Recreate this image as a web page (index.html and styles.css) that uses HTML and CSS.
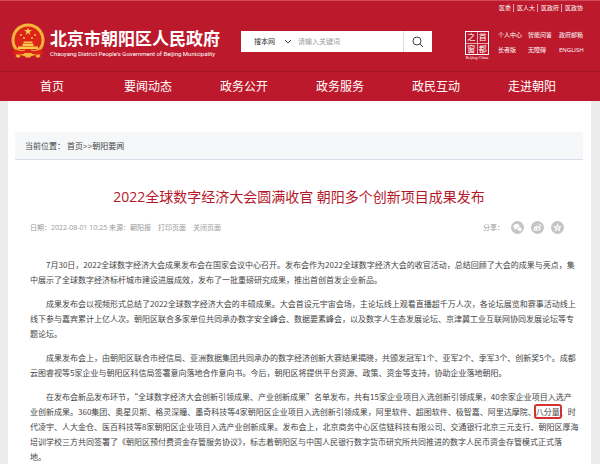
FILE: index.html
```html
<!DOCTYPE html>
<html lang="zh-CN">
<head>
  <meta charset="UTF-8">
  <title>2022全球数字经济大会圆满收官 朝阳多个创新项目成果发布</title>
  <link rel="stylesheet" href="styles.css">
</head>
<body>
  <header class="header">
    <div class="top-links">
      <a href="#">区委</a><a href="#">区人大</a><a href="#">区政府</a><a href="#">区政协</a>
    </div>
    <div class="banner">
      <a href="#" class="logo">
        <svg class="emblem" viewBox="0 0 68 72">
          <path d="M8 48 L4 62 L14 70 L26 66 L34 70 L42 66 L54 70 L64 62 L60 48 Z" fill="#dc2418"/>
          <circle cx="34" cy="34" r="33" fill="#f3b53c"/>
          <circle cx="34" cy="34" r="27" fill="#dc2418"/>
          <path d="M34 9 l2 5 h6 l-5 4 l2 6 l-5 -4 l-5 4 l2 -6 l-5 -4 h6 z" fill="#f8c94a"/>
          <circle cx="20" cy="24" r="2" fill="#f8c94a"/>
          <circle cx="26" cy="30" r="2" fill="#f8c94a"/>
          <circle cx="42" cy="30" r="2" fill="#f8c94a"/>
          <circle cx="48" cy="24" r="2" fill="#f8c94a"/>
          <path d="M26 37 h16 l2 4 h-20 z M23 42 h22 v4 h-22 z M14 47 h40 v5 h-40 z" fill="#f8c94a"/>
          <path d="M7 52 Q20 58 28 54 L34 58 L40 54 Q48 58 61 52 L58 60 Q46 65 40 60 L34 64 L28 60 Q22 65 10 60 Z" fill="#dc2418"/>
          <path d="M12 53 Q22 57 28 54 M56 53 Q46 57 40 54" fill="none" stroke="#f3b53c" stroke-width="2"/>
          <path d="M12 62 l7 3 l-3 5 l-7 -3 z M56 62 l-7 3 l3 5 l7 -3 z M27 60 h14 l-2 9 h-10 z" fill="#f3b53c"/>
        </svg>
        <span class="logo-text">
          <strong>北京市朝阳区人民政府</strong>
          <small>Chaoyang District People's Government of Beijing Municipality</small>
        </span>
      </a>
      <form class="search">
        <select aria-label="搜索范围">
          <option>搜本网</option>
        </select>
        <svg class="arrow" viewBox="0 0 8 5"><path d="M1 1 L4 4 L7 1" fill="none" stroke="#444"/></svg>
        <input type="text" placeholder="请输入关键词" aria-label="关键词">
        <button type="button" aria-label="搜索">
          <svg viewBox="0 0 12 12"><circle cx="5" cy="5" r="4" fill="none" stroke="#444"/><path d="M8 8 L11 11" stroke="#444"/></svg>
        </button>
      </form>
      <a href="#" class="seal">
        <span class="seal-grid"><i>之</i><i>首</i><i>窗</i><i>都</i></span>
        <small>Beijing·China</small>
      </a>
      <div class="tools">
        <a href="#">个人中心</a><a href="#">智能问答</a><a href="#">政府邮箱</a>
        <a href="#">长者版</a><a href="#">无障碍</a><a href="#">ENGLISH</a>
      </div>
    </div>
    <nav class="nav">
      <a href="#">首页</a>
      <a href="#">要闻动态</a>
      <a href="#">政务公开</a>
      <a href="#">政务服务</a>
      <a href="#">政民互动</a>
      <a href="#">走进朝阳</a>
    </nav>
  </header>

  <main class="main">
    <div class="crumb">当前位置： <a href="#">首页</a>&gt;&gt;<a href="#">朝阳要闻</a></div>

    <h1>2022全球数字经济大会圆满收官 朝阳多个创新项目成果发布</h1>

    <div class="meta">
      <span>日期：2022-08-01 10:25 来源：朝阳报</span>
      <a href="#">打印页面</a>
      <a href="#">关闭页面</a>
      <div class="share">
        <span>分享：</span>
        <a href="#" aria-label="微信">
          <svg viewBox="0 0 26 26"><circle cx="13" cy="13" r="13" fill="#c4c4c4"/><ellipse cx="11" cy="11" rx="6" ry="5" fill="#fff"/><path d="M7 14 l-1 4 l4 -2 z" fill="#fff"/><ellipse cx="17" cy="16" rx="5" ry="4" fill="#fff" stroke="#c4c4c4"/><path d="M19 18 l2 3 l-5 -1 z" fill="#fff"/></svg>
        </a>
        <a href="#" aria-label="微博">
          <svg viewBox="0 0 26 26"><circle cx="13" cy="13" r="13" fill="#c4c4c4"/><path d="M5 16 Q6 11 11 9 Q13 9 13 11 Q18 10 17 13 Q21 15 18 18 Q15 21 10 20 Q5 20 5 16 Z" fill="#fff"/><ellipse cx="12" cy="16" rx="4" ry="3" fill="#c4c4c4"/><circle cx="11" cy="16" r="2" fill="#fff"/><path d="M15 6 Q21 6 20 12 M15 9 Q18 9 17 12" fill="none" stroke="#fff" stroke-width="1.5"/></svg>
        </a>
        <a href="#" aria-label="收藏">
          <svg viewBox="0 0 26 26"><circle cx="13" cy="13" r="13" fill="#c4c4c4"/><path d="M13 5 l2.500 5.500 l6 .5 l-4.500 4 l1.500 6 l-5.500 -3 l-5.500 3 l1.500 -6 l-4.500 -4 l6 -.5 z" fill="#fff"/><path d="M10 12 h5 l-4 4 h5" fill="none" stroke="#c4c4c4" stroke-width="1.500"/></svg>
        </a>
      </div>
    </div>

    <article class="article">
      <p>7月30日，2022全球数字经济大会成果发布会在国家会议中心召开。发布会作为2022全球数字经济大会的收官活动，总结回顾了大会的成果与亮点，集<br>中展示了全球数字经济标杆城市建设进展成效，发布了一批重磅研究成果，推出首创首发企业新品。</p>
      <p>成果发布会以视频形式总结了2022全球数字经济大会的丰硕成果。大会首设元宇宙会场，主论坛线上观看直播超千万人次，各论坛展览和赛事活动线上<br>线下参与嘉宾累计上亿人次。朝阳区联合多家单位共同承办数字安全峰会、数据要素峰会，以及数字人生态发展论坛、京津冀工业互联网协同发展论坛等专<br>题论坛。</p>
      <p>成果发布会上，由朝阳区联合市经信局、亚洲数据集团共同承办的数字经济创新大赛结果揭晓，共颁发冠军1个、亚军2个、季军3个、创新奖5个。成都<br>云图睿视等5家企业与朝阳区科信局签署意向落地合作意向书。今后，朝阳区将提供平台资源、政策、资金等支持，协助企业落地朝阳。</p>
      <p>在发布会新品发布环节，“全球数字经济大会创新引领成果、产业创新成果”名单发布，共有15家企业项目入选创新引领成果，40余家企业项目入选产<br>业创新成果。360集团、奥星贝斯、格灵深瞳、墨奇科技等4家朝阳区企业项目入选创新引领成果，阿里软件、超图软件、极智嘉、阿里达摩院、<mark>八分量</mark>、时<br>代凌宇、人大金仓、医百科技等8家朝阳区企业项目入选产业创新成果。发布会上，北京商务中心区信链科技有限公司、交通银行北京三元支行、朝阳区厚海<br>培训学校三方共同签署了《朝阳区预付费资金存管服务协议》，标志着朝阳区与中国人民银行数字货币研究所共同推进的数字人民币资金存管模式正式落<br>地。</p>
    </article>
  </main>
</body>
</html>
```
FILE: styles.css
```css
* {
  box-sizing: border-box;
}

body {
  margin: 0;
  background-color: #ececec;
  color: #444;
  font-family: "Open Sans", "Noto Sans CJK SC", sans-serif;
  font-size: 8px;
}

a {
  color: inherit;
  text-decoration: none;
}

svg {
  display: block;
}

.header {
  background-color: #bc1a2c;
  border-top: 1px solid #d0485a;
  color: #fff;
}

.top-links {
  display: flex;
  justify-content: flex-end;
  padding: 3px 17px 0 0;
  font-size: 6px;
  line-height: 8px;
}

.top-links a + a {
  margin-left: 2px;
  padding-left: 3px;
  border-left: 1px solid #e9a5ad;
}

.banner {
  display: flex;
  align-items: flex-start;
  height: 59px;
  padding: 11px 14px 0 11px;
}

.logo {
  display: flex;
  gap: 5px;
  width: 230px;
}

.emblem {
  width: 34px;
  height: 36px;
}

.logo-text {
  padding-top: 5px;
  white-space: nowrap;
}

.logo-text strong {
  display: block;
  font-size: 17px;
  line-height: 22px;
}

.logo-text small {
  display: block;
  font-family: Roboto, sans-serif;
  font-size: 6px;
  line-height: 8px;
}

.search {
  display: flex;
  align-items: center;
  flex: 1;
  height: 21px;
  margin-top: 8px;
  padding-left: 13px;
  background-color: #fff;
}

.search select,
.search input,
.search button {
  margin: 0;
  padding: 0;
  border: 0;
  background: none;
  color: #333;
  font-family: inherit;
  font-size: 7px;
}

.search select {
  width: 30px;
  appearance: none;
}

.search input {
  flex: 1;
  min-width: 0;
  margin-left: 6px;
}

.search input::placeholder {
  color: #999;
}

.arrow {
  width: 8px;
  height: 5px;
}

.search button {
  display: flex;
  align-items: center;
  justify-content: center;
  width: 29px;
  height: 21px;
  border-left: 1px solid #ddd;
}

.search button svg {
  width: 12px;
  height: 12px;
}

.seal {
  width: 26px;
  margin: 8px 8px 0 32px;
  text-align: center;
}

.seal-grid {
  display: grid;
  grid-template-columns: 1fr 1fr;
  gap: 1px;
  width: 24px;
  height: 24px;
  margin: 0 auto;
  border: 1px solid #fff;
  background-color: #e9a5ad;
}

.seal-grid i {
  background-color: #bc1a2c;
  font-family: "Noto Sans CJK SC", sans-serif;
  font-size: 8px;
  font-style: normal;
  line-height: 10px;
}

.seal small {
  display: block;
  font-family: "Liberation Serif", serif;
  font-size: 4px;
  line-height: 5px;
}

.tools {
  display: grid;
  grid-template-columns: 30px 31px 27px;
  margin-top: 5px;
  font-size: 6px;
  line-height: 15px;
  white-space: nowrap;
}

.nav {
  display: grid;
  grid-template-columns: repeat(6, 1fr);
  padding: 0 20px 0 4px;
  border-top: 1px solid #a31525;
  font-size: 12px;
  line-height: 29px;
  text-align: center;
}

.main {
  margin: 0 9px 0 8px;
  padding: 31px 8px 1px 7px;
  background-color: #fff;
}

.crumb {
  padding: 0 10px;
  border-bottom: 1px solid #d5e0ea;
  background-color: #f5f7f9;
  line-height: 27px;
}

h1 {
  margin: 27px 0 0;
  color: #b5182a;
  font-size: 14px;
  font-weight: normal;
  line-height: 20px;
  text-align: center;
}

.meta {
  display: flex;
  align-items: center;
  gap: 7px;
  margin-top: 14px;
  padding: 0 19px 0 15px;
  color: #999;
  font-size: 7px;
  line-height: 13px;
}

.share {
  display: flex;
  gap: 7px;
  margin-left: auto;
}

.share svg {
  width: 13px;
  height: 13px;
}

.article {
  margin-top: 23px;
  padding-left: 15px;
  font-family: "Noto Sans CJK SC", sans-serif;
  line-height: 15px;
}

.article p {
  margin: 0 0 9px;
  text-indent: 16px;
}

.article mark {
  border-radius: 1px;
  outline: 2px solid #d3302f;
  background: none;
  color: inherit;
}
```
